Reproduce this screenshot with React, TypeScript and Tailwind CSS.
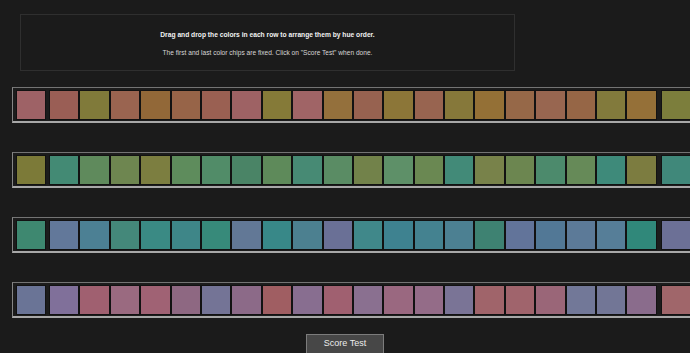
import { FC } from "react";

interface RowProps {
  first: string;
  chips: string[];
  last: string;
}

const rows: RowProps[] = [
  {
    first: "#9e6266",
    chips: [
      "#9a5e55", "#807a3a", "#9a6450", "#926838", "#976448", "#9a6052", "#9e6264",
      "#857a38", "#a06466", "#94703c", "#976250", "#8c7638", "#986450", "#86783a",
      "#947036", "#966848", "#986650", "#966646", "#827a3c", "#957038",
    ],
    last: "#7c7e3c",
  },
  {
    first: "#7c7a38",
    chips: [
      "#438a74", "#5f8a5c", "#6e8650", "#7c7e40", "#5e8c5c", "#518c68", "#4a8466",
      "#5e8a5a", "#478a74", "#5a8c64", "#72824a", "#5e9068", "#6a8852", "#428a78",
      "#78824a", "#6c8650", "#4c8a6c", "#668a58", "#3e8a7a", "#7c7c40",
    ],
    last: "#40887a",
  },
  {
    first: "#3e8870",
    chips: [
      "#62789a", "#4c8094", "#44887a", "#3a8a84", "#3e8688", "#378a7a", "#627896",
      "#388888", "#4c8090", "#6a7096", "#40888a", "#3e8290", "#448290", "#4c8092",
      "#3e8272", "#62749a", "#527896", "#5c7a98", "#567e98", "#30887a",
    ],
    last: "#6c7096",
  },
  {
    first: "#6a7496",
    chips: [
      "#80709a", "#a06070", "#9a6a80", "#a06274", "#8e6882", "#747496", "#8c6a88",
      "#a05e62", "#886e90", "#a06070", "#8a7090", "#9a6880", "#946c88", "#7a7496",
      "#a0646a", "#a0646c", "#9a6678", "#727898", "#727696", "#8a6c8c",
    ],
    last: "#a0666a",
  },
];

const Chip: FC<{ color: string; wide?: boolean }> = ({ color, wide }) => (
  <div
    className={`${wide ? "w-[30px]" : "w-[30.4px]"} h-[30px] shrink-0 border border-[#121212]`}
    style={{ backgroundColor: color }}
  />
);

const ChipRow: FC<RowProps> = ({ first, chips, last }) => (
  <div className="flex w-[690px] shrink-0 pl-[12px]">
    <div className="flex items-start h-[36px] shrink-0 border border-[#858585] border-t-[#747474] border-b-2 border-b-[#a8a8a8] bg-[#1c1c1c] pl-[3px] pr-[3px] pt-[2px]">
      <Chip color={first} wide />
      <div className="flex ml-[3px] bg-[#101010]">
        {chips.map((c, i) => (
          <Chip key={i} color={c} />
        ))}
      </div>
      <div className="ml-[4px]">
        <Chip color={last} wide />
      </div>
    </div>
  </div>
);

export default function App() {
  return (
    <div
      className="w-[690px] h-[353px] overflow-hidden bg-[#1b1b1b] flex flex-col"
      style={{ fontFamily: '"Liberation Sans", Arial, sans-serif' }}
    >
      <div className="shrink-0 ml-[20px] mt-[14px] w-[495px] h-[57px] border border-[#2f2f2f] flex flex-col items-center pt-[17px]">
        <p className="text-[6.7px] font-bold text-[#f2f2f2] leading-none">
          Drag and drop the colors in each row to arrange them by hue order.
        </p>
        <p className="mt-[11px] text-[6.6px] text-[#d6d6d6] leading-none">
          The first and last color chips are fixed. Click on "Score Test" when done.
        </p>
      </div>

      <div className="shrink-0 mt-[16px] flex flex-col gap-[29px]">
        {rows.map((r, i) => (
          <ChipRow key={i} {...r} />
        ))}
      </div>

      <div className="shrink-0 flex justify-center mt-[16px]">
        <button className="w-[78px] h-[24px] bg-[#474747] border border-[#7c7c7c] text-[9px] text-[#ececec] pb-[4px]">
          Score Test
        </button>
      </div>
    </div>
  );
}
